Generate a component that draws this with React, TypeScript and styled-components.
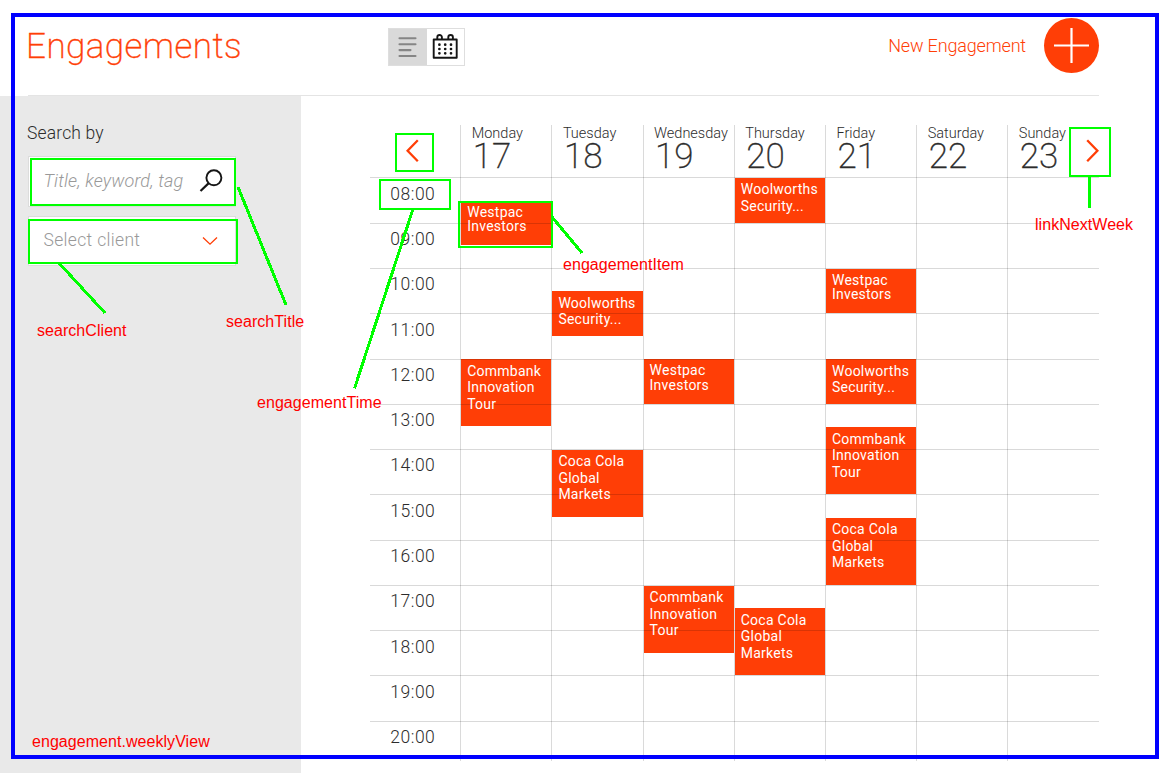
import React from 'react';
import styled, { createGlobalStyle } from 'styled-components';

const ORANGE = '#ff3e06';

const GlobalStyle = createGlobalStyle`
  * { box-sizing: border-box; }
  body { margin: 0; background: #fff; overflow: hidden; }
  button { appearance: none; border: 0; background: none; padding: 0; font: inherit; color: inherit; }
  svg { display: block; }
`;

const Page = styled.div`
  position: relative;
  width: 1171px;
  height: 773px;
  overflow: hidden;
  background: #fff;
  color: #2c2c2c;
  font-family: Roboto, sans-serif;
  font-weight: 300;
`;

const Header = styled.header`
  display: flex;
  align-items: flex-start;
  height: 96px;
  margin: 0 72px 0 26px;
`;

const Title = styled.h1`
  width: 362px;
  margin: 27px 0 0;
  color: ${ORANGE};
  font-size: 35px;
  font-weight: 200;
  line-height: 40px;
  letter-spacing: 0.45px;
  -webkit-text-stroke: 0.35px ${ORANGE};
`;

const Toggle = styled.div`
  display: flex;
  width: 77px;
  height: 38px;
  margin-top: 28px;
  border: 1px solid #dedede;
`;

const ToggleButton = styled.button<{ $active?: boolean }>`
  display: flex;
  flex: ${p => (p.$active ? '0 0 38px' : '1')};
  align-items: center;
  justify-content: center;
  background: ${p => (p.$active ? '#d9d9d9' : '#fff')};
`;

const NewEngagement = styled.button`
  display: flex;
  align-items: center;
  gap: 18px;
  margin: 18px 0 0 auto;
  color: ${ORANGE};
  font-size: 18px;
  letter-spacing: -0.16px;
`;

const AddCircle = styled.span`
  display: flex;
  align-items: center;
  justify-content: center;
  width: 55px;
  height: 55px;
  border-radius: 50%;
  background: ${ORANGE};
`;

const Divider = styled.hr`
  height: 1px;
  margin: -1px 72px 0 28px;
  border: 0;
  background: #e4e4e4;
`;

const Body = styled.div`
  display: flex;
  height: 677px;
`;

const Sidebar = styled.aside`
  width: 301px;
  padding: 25px 0 0 28px;
  background: #e9e9e9;
`;

const SearchHeading = styled.h2`
  margin: 0 0 11px -1px;
  font-size: 17.5px;
  font-weight: 300;
  line-height: 24px;
  letter-spacing: 0.15px;
`;

const Field = styled.div<{ $height: number; $italic?: boolean }>`
  display: flex;
  align-items: center;
  justify-content: space-between;
  width: 208px;
  height: ${p => p.$height}px;
  margin-bottom: 9px;
  padding: 0 12px 2px 14.5px;
  border: 1px solid #dcdcdc;
  background: #fff;
  color: #999;
  font-size: ${p => (p.$italic ? '18px' : '17.5px')};
  font-style: ${p => (p.$italic ? 'italic' : 'normal')};
  letter-spacing: ${p => (p.$italic ? '0.15px' : '0.33px')};
`;

const ChevronSlot = styled.span`
  margin: 1px 5px 0 0;
`;

const Calendar = styled.section`
  display: grid;
  grid-template-columns: 90.2px repeat(7, 91.2px);
  grid-template-rows: 52.4px repeat(24, 22.645px) repeat(2, 20px);
  width: 728.6px;
  margin: 29px 0 0 69px;
`;

const DayHeader = styled.div<{ $column: number }>`
  grid-column: ${p => p.$column};
  grid-row: 1;
  padding-left: 11.5px;
  white-space: nowrap;
`;

const DayName = styled.div`
  font-size: 14.5px;
  line-height: 17px;
`;

const DayNumber = styled.div`
  padding-left: 1px;
  font-size: 35px;
  font-weight: 200;
  line-height: 30px;
  letter-spacing: 0;
  -webkit-text-stroke: 0.3px #2c2c2c;
`;

const DayRule = styled.div<{ $column: number }>`
  grid-column: ${p => p.$column};
  grid-row: 1 / -1;
  border-left: 1px solid #dadada;
`;

const HourRule = styled.div<{ $row: number }>`
  z-index: 1;
  grid-column: 1 / -1;
  grid-row: ${p => p.$row};
  border-top: 1px solid rgba(0, 0, 0, 0.15);
`;

const Hour = styled.div<{ $row: number }>`
  grid-column: 1;
  grid-row: ${p => p.$row} / span 2;
  padding: 5.4px 0 0 20.3px;
  font-size: 17.5px;
  line-height: 22px;
  letter-spacing: 0.5px;
`;

const Event = styled.article<{ $column: number; $row: number; $span: number }>`
  grid-column: ${p => p.$column};
  grid-row: ${p => p.$row} / span ${p => p.$span};
  margin: 0.6px 0 0 1px;
  background: ${ORANGE};
`;

const EventText = styled.p<{ $tight?: boolean }>`
  position: relative;
  z-index: 2;
  margin: 0;
  padding: ${p => (p.$tight ? '4.2px' : '3.5px')} 0 0 6px;
  color: #fff;
  font-size: 14px;
  font-weight: 400;
  line-height: ${p => (p.$tight ? '14.5px' : '16.5px')};
  letter-spacing: 0.25px;
  white-space: pre;
`;

const WeekLink = styled.button<{ $next?: boolean }>`
  z-index: 2;
  grid-column: ${p => (p.$next ? 8 : 1)};
  grid-row: 1;
  align-self: start;
  justify-self: ${p => (p.$next ? 'end' : 'start')};
  margin: 13.5px 0 0 ${p => (p.$next ? '0' : '36px')};
  color: ${ORANGE};
`;

const Annotations = styled.div`
  position: absolute;
  inset: 0;
  z-index: 5;
  pointer-events: none;
`;

const Frame = styled.div`
  position: absolute;
  top: 13px;
  left: 11px;
  width: 1148px;
  height: 746px;
  border: 4px solid #00f;
`;

const Highlight = styled.div<{ $x: number; $y: number; $w: number; $h: number }>`
  position: absolute;
  top: ${p => p.$y}px;
  left: ${p => p.$x}px;
  width: ${p => p.$w}px;
  height: ${p => p.$h}px;
  border: 2px solid #0f0;
`;

const Label = styled.span<{ $x: number; $y: number }>`
  position: absolute;
  top: ${p => p.$y}px;
  left: ${p => p.$x}px;
  color: #f00;
  font: 400 16px/18px "Liberation Sans", Arial, sans-serif;
  letter-spacing: 0.05px;
  white-space: nowrap;
`;

const Connectors = styled.svg`
  position: absolute;
  inset: 0;
`;

const ListIcon = () => (
  <svg width="20" height="22" viewBox="0 0 20 22" stroke="#858585" strokeWidth="2.1" strokeLinecap="round">
    <path d="M1.5 2.2H17.5M1.5 8.2H17.5M1.5 14.1H12.5M1.5 20H17.5" />
  </svg>
);

const CalendarIcon = () => (
  <svg width="27" height="28" viewBox="0 0 27 28" fill="none" stroke="#151515">
    <path d="M1.7 6.5H24.7V24.7H1.7Z" strokeWidth="1.9" strokeLinejoin="round" />
    <path d="M5.3 6.4V4.3a2.3 2.3 0 0 1 4.6 0V6.4M16.3 6.4V4.3a2.3 2.3 0 0 1 4.6 0V6.4" strokeWidth="1.9" />
    <path
      d="M7.4 11.7h.01M13.2 11.7h.01M19 11.7h.01M7.4 16h.01M13.2 16h.01M19 16h.01M7.4 20.3h.01M13.2 20.3h.01M19 20.3h.01"
      strokeWidth="2.7"
      strokeLinecap="round"
    />
  </svg>
);

const PlusIcon = () => (
  <svg width="35" height="35" viewBox="0 0 35 35" stroke="#fff" strokeWidth="2.2">
    <path d="M17.5 0V35M0 17.5H35" />
  </svg>
);

const SearchIcon = () => (
  <svg width="24" height="24" viewBox="0 0 24 24" fill="none" stroke="#151515" strokeWidth="1.9">
    <circle cx="14.9" cy="8.8" r="7.5" />
    <path d="M9.5 14.4L1.5 22" strokeWidth="2.2" />
  </svg>
);

const ChevronDown = () => (
  <svg width="16" height="10" viewBox="0 0 16 10" fill="none" stroke={ORANGE} strokeWidth="1.3">
    <path d="M1 1.5L8 8.2L15 1.5" />
  </svg>
);

const Arrow = ({ next }: { next?: boolean }) => (
  <svg width="13" height="24" viewBox="0 0 13 24" fill="none" stroke={ORANGE} strokeWidth="2.3">
    <path d={next ? 'M1.2 1.2L11.4 11.7L1.2 22.2' : 'M11.8 1.2L1.6 11.7L11.8 22.2'} />
  </svg>
);

const days = [
  ['Monday', 17],
  ['Tuesday', 18],
  ['Wednesday', 19],
  ['Thursday', 20],
  ['Friday', 21],
  ['Saturday', 22],
  ['Sunday', 23],
] as const;

const hours = Array.from({ length: 13 }, (_, i) => 8 + i);

const WESTPAC = 'Westpac\nInvestors';
const WOOLWORTHS = 'Woolworths\nSecurity...';
const COMMBANK = 'Commbank\nInnovation\nTour';
const COCA_COLA = 'Coca Cola\nGlobal\nMarkets';

const events = [
  { day: 0, start: 8.5, length: 1, text: WESTPAC },
  { day: 0, start: 12, length: 1.5, text: COMMBANK },
  { day: 1, start: 10.5, length: 1, text: WOOLWORTHS },
  { day: 1, start: 14, length: 1.5, text: COCA_COLA },
  { day: 2, start: 12, length: 1, text: WESTPAC },
  { day: 2, start: 17, length: 1.5, text: COMMBANK },
  { day: 3, start: 8, length: 1, text: WOOLWORTHS },
  { day: 3, start: 17.5, length: 1.5, text: COCA_COLA },
  { day: 4, start: 10, length: 1, text: WESTPAC },
  { day: 4, start: 12, length: 1, text: WOOLWORTHS },
  { day: 4, start: 13.5, length: 1.5, text: COMMBANK },
  { day: 4, start: 15.5, length: 1.5, text: COCA_COLA },
];

const rowOf = (time: number) => 2 + (time - 8) * 2;

const WeekCalendar = () => (
  <Calendar>
    {days.map(([name], i) => (
      <DayRule key={name} $column={i + 2} />
    ))}
    <WeekLink aria-label="Previous week">
      <Arrow />
    </WeekLink>
    {days.map(([name, date], i) => (
      <DayHeader key={name} $column={i + 2}>
        <DayName>{name}</DayName>
        <DayNumber>{date}</DayNumber>
      </DayHeader>
    ))}
    <WeekLink $next aria-label="Next week">
      <Arrow next />
    </WeekLink>
    {hours.map(h => (
      <React.Fragment key={h}>
        <HourRule $row={rowOf(h)} />
        <Hour $row={rowOf(h)}>{String(h).padStart(2, '0')}:00</Hour>
      </React.Fragment>
    ))}
    {events.map(e => (
      <Event key={`${e.day}-${e.start}`} $column={e.day + 2} $row={rowOf(e.start)} $span={e.length * 2}>
        <EventText $tight={e.text === WESTPAC}>{e.text}</EventText>
      </Event>
    ))}
  </Calendar>
);

export default function App() {
  return (
    <Page>
      <GlobalStyle />
      <Header>
        <Title>Engagements</Title>
        <Toggle>
          <ToggleButton $active aria-label="List view">
            <ListIcon />
          </ToggleButton>
          <ToggleButton aria-label="Calendar view">
            <CalendarIcon />
          </ToggleButton>
        </Toggle>
        <NewEngagement>
          New Engagement
          <AddCircle>
            <PlusIcon />
          </AddCircle>
        </NewEngagement>
      </Header>
      <Divider />
      <Body>
        <Sidebar>
          <SearchHeading>Search by</SearchHeading>
          <Field $height={51} $italic>
            Title, keyword, tag
            <SearchIcon />
          </Field>
          <Field $height={50}>
            Select client
            <ChevronSlot>
              <ChevronDown />
            </ChevronSlot>
          </Field>
        </Sidebar>
        <WeekCalendar />
      </Body>
      <Annotations>
        <Connectors width="1171" height="773" stroke="#0f0" strokeWidth="3" shapeRendering="crispEdges">
          <path d="M59 263L105 313M238 187L286 305M552 217L582 253M413 209L354.5 388.5M1089.5 176V208" />
        </Connectors>
        <Highlight $x={30} $y={158} $w={206} $h={48} />
        <Highlight $x={28} $y={219} $w={210} $h={45} />
        <Highlight $x={395} $y={133} $w={39} $h={39} />
        <Highlight $x={379} $y={179} $w={72} $h={31} />
        <Highlight $x={458} $y={201} $w={95} $h={47} />
        <Highlight $x={1069} $y={127} $w={42} $h={50} />
        <Frame />
        <Label $x={37} $y={322}>searchClient</Label>
        <Label $x={226} $y={313}>searchTitle</Label>
        <Label $x={563} $y={256}>engagementItem</Label>
        <Label $x={1035} $y={216}>linkNextWeek</Label>
        <Label $x={257} $y={394}>engagementTime</Label>
        <Label $x={32} $y={733}>engagement.weeklyView</Label>
      </Annotations>
    </Page>
  );
}
